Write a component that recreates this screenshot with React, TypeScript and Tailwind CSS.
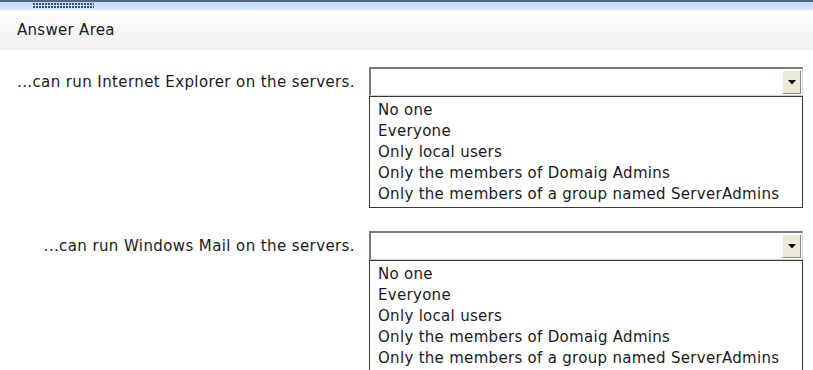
const options = [
  "No one",
  "Everyone",
  "Only local users",
  "Only the members of Domaig Admins",
  "Only the members of a group named ServerAdmins",
];

function Dropdown() {
  return (
    <div className="w-[434px]">
      <div className="h-[29px] border-t-2 border-l-2 border-t-[#7a7a7a] border-l-[#7a7a7a] border-r border-b border-r-[#d4d0c8] border-b-[#d4d0c8] bg-white flex justify-end items-start pt-[1px] pr-[1px]">
        <div className="w-[19px] h-[24px] bg-[#ece9d8] border-t border-l border-t-white border-l-white border-r border-b border-r-[#8a8a8a] border-b-[#8a8a8a] flex items-center justify-center">
          <svg width="8" height="5" viewBox="0 0 8 5">
            <path d="M0 0 H8 L4 4.5 Z" fill="#000" />
          </svg>
        </div>
      </div>
      <ul className="border border-[#3a3a3a] bg-white pl-[8px] pt-[3px] pb-[2px]">
        {options.map((o) => (
          <li key={o} className="h-[21px] leading-[21px] text-[15px] tracking-[0.3px] text-[#1a1a1a]">
            {o}
          </li>
        ))}
      </ul>
    </div>
  );
}

function Row({ label }: { label: string }) {
  return (
    <div className="flex items-start">
      <div className="w-[355px] text-right pt-[5px] text-[15px] tracking-[0.4px] text-[#1a1a1a] leading-[21px]">
        {label}
      </div>
      <div className="ml-[14px]">
        <Dropdown />
      </div>
    </div>
  );
}

export default function App() {
  return (
    <div
      className="w-[813px] h-[370px] overflow-hidden bg-white"
      style={{ fontFamily: '"DejaVu Sans", Verdana, sans-serif' }}
    >
      <div className="h-[2px] bg-[#55657a]" />
      <div className="h-[8px] bg-gradient-to-b from-[#c2dcf6] to-[#d6e8fa] pl-[33px] flex items-center">
        <svg width="61" height="6" viewBox="0 0 61 6">
          <defs>
            <pattern id="grip" width="3" height="3" patternUnits="userSpaceOnUse">
              <rect x="0" y="0" width="2" height="2" fill="#2f4f80" />
            </pattern>
          </defs>
          <rect width="61" height="6" fill="url(#grip)" />
        </svg>
      </div>
      <div className="h-[40px] bg-gradient-to-b from-white to-[#f0f0f0] flex items-center pl-[17px] text-[15px] tracking-[0.3px] text-[#1a1a1a]">
        Answer Area
      </div>
      <div className="pt-[17px] flex flex-col gap-[23px]">
        <Row label="...can run Internet Explorer on the servers." />
        <Row label="...can run Windows Mail on the servers." />
      </div>
    </div>
  );
}
